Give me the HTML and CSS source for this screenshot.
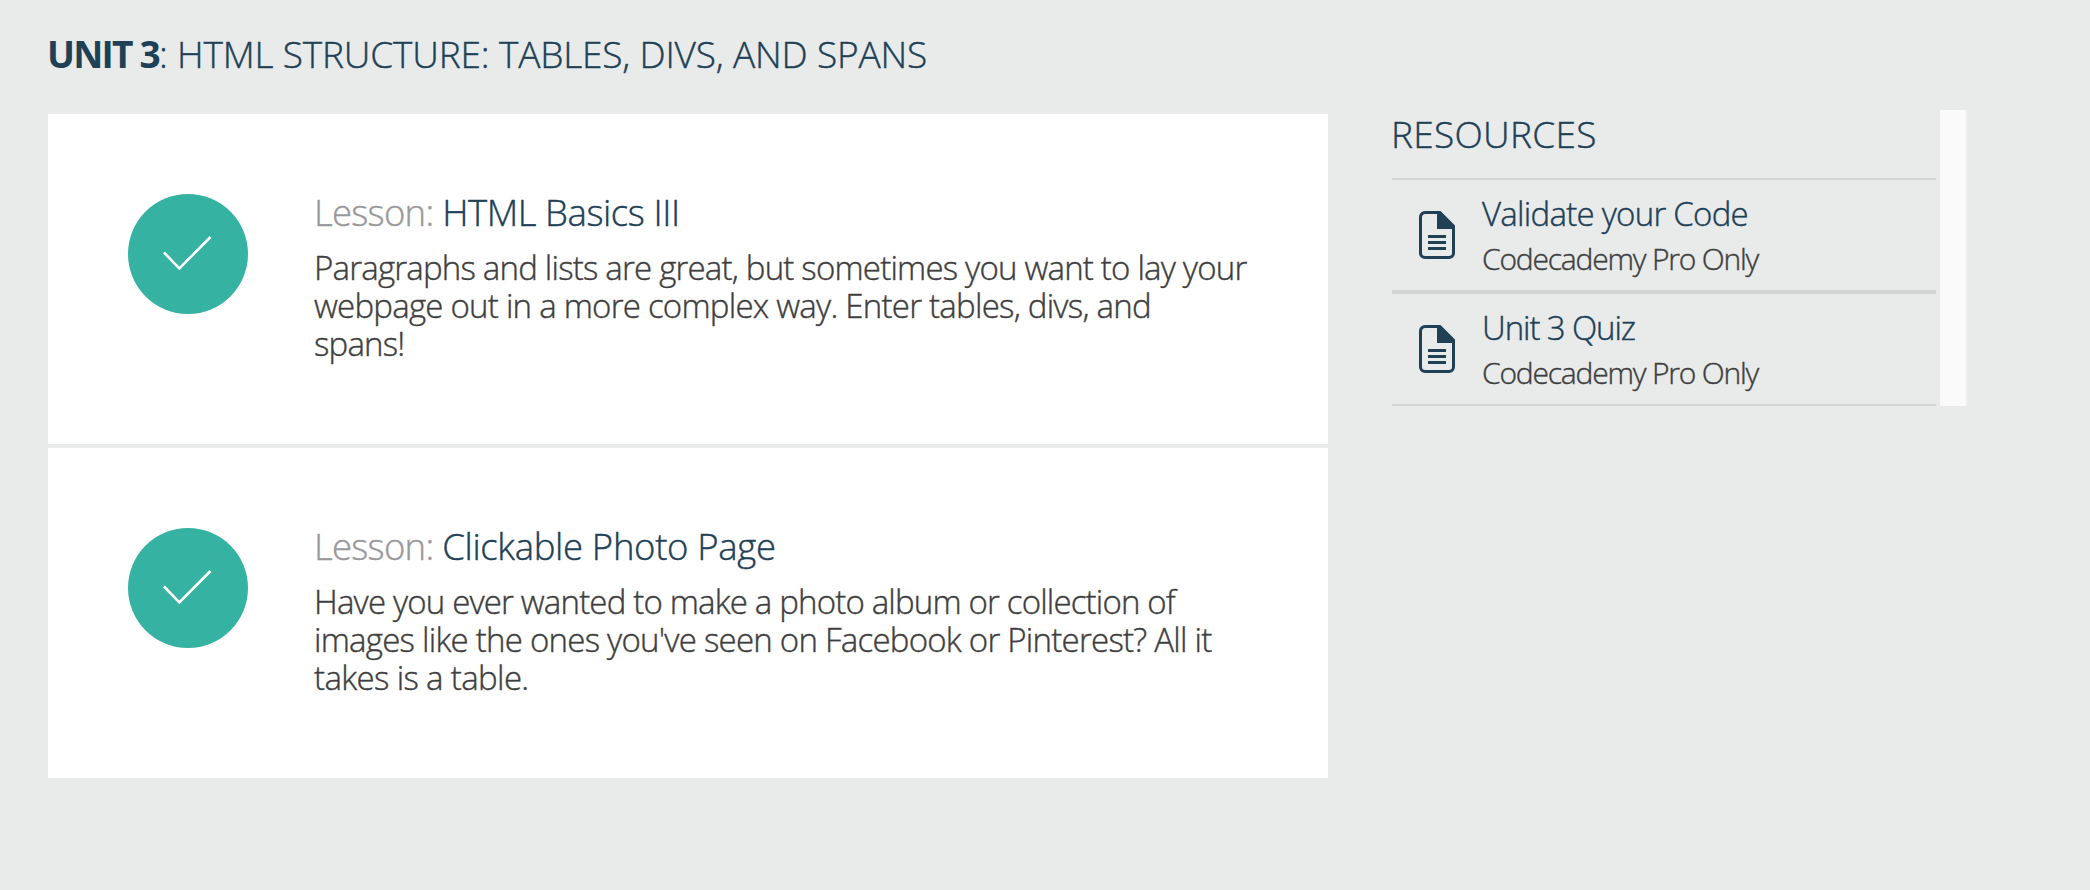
FILE: index.html
```html
<!DOCTYPE html>
<html lang="en">
<head>
<meta charset="utf-8">
<title>Unit 3</title>
<link rel="stylesheet" href="styles.css">
</head>
<body>
<h1 class="unit-title"><strong class="unit-number">UNIT 3</strong>: HTML STRUCTURE: TABLES, DIVS, AND SPANS</h1>
<div class="columns">
  <main class="lessons">
    <article class="lesson">
      <svg class="badge" viewBox="0 0 120 120"><circle cx="60" cy="60" r="60"/><path d="M36 58.5 51.3 74.5 82.5 43"/></svg>
      <div class="lesson-text">
        <h2 class="lesson-title"><span class="kind">Lesson:</span> <span class="name-basics">HTML Basics III</span></h2>
        <p class="lesson-body"><span class="line">Paragraphs and lists are great, but sometimes you want to lay your</span> <span class="line loose">webpage out in a more complex way. Enter tables, divs, and</span> <span class="line">spans!</span></p>
      </div>
    </article>
    <article class="lesson">
      <svg class="badge" viewBox="0 0 120 120"><circle cx="60" cy="60" r="60"/><path d="M36 58.5 51.3 74.5 82.5 43"/></svg>
      <div class="lesson-text">
        <h2 class="lesson-title"><span class="kind">Lesson:</span> <span class="name-photo">Clickable Photo Page</span></h2>
        <p class="lesson-body"><span class="line tight">Have you ever wanted to make a photo album or collection of</span> <span class="line loose">images like the ones you've seen on Facebook or Pinterest? All it</span> <span class="line looser">takes is a table.</span></p>
      </div>
    </article>
  </main>
  <aside class="resources">
    <div class="resource-list">
      <h2 class="resources-title">RESOURCES</h2>
      <div class="resource">
        <svg class="doc" viewBox="0 0 36 48"><path class="outline" d="M19.5 1.5H6A4.5 4.5 0 0 0 1.5 6V42A4.5 4.5 0 0 0 6 46.5H30A4.5 4.5 0 0 0 34.5 42V16"/><path d="M18 0H21.5L36 14.5V18H18ZM9 24H27V27H9ZM9 30H27V33H9ZM9 36H27V39H9Z"/></svg>
        <div><div class="resource-name">Validate your Code</div><div class="resource-note">Codecademy Pro Only</div></div>
      </div>
      <div class="resource">
        <svg class="doc" viewBox="0 0 36 48"><path class="outline" d="M19.5 1.5H6A4.5 4.5 0 0 0 1.5 6V42A4.5 4.5 0 0 0 6 46.5H30A4.5 4.5 0 0 0 34.5 42V16"/><path d="M18 0H21.5L36 14.5V18H18ZM9 24H27V27H9ZM9 30H27V33H9ZM9 36H27V39H9Z"/></svg>
        <div><div class="resource-name quiz">Unit 3 Quiz</div><div class="resource-note">Codecademy Pro Only</div></div>
      </div>
    </div>
    <div class="scroll-track"></div>
  </aside>
</div>
</body>
</html>
```
FILE: styles.css
```css
* { box-sizing: border-box; margin: 0; padding: 0; }
body { background: #e8ebea; color: #3e3e40; font-family: "Open Sans", sans-serif; font-weight: 300; height: 890px; padding: 29px 0 0 48px; overflow: hidden; white-space: nowrap; -webkit-text-stroke: 0.4px currentColor; }
.unit-title { height: 81px; margin-left: -1px; font-size: 37px; line-height: 50px; font-weight: 300; color: #204056; letter-spacing: -0.17px; }
.unit-number { font-weight: 700; letter-spacing: -1.75px; -webkit-text-stroke: 0; }
.columns { display: flex; align-items: flex-start; gap: 64px; }
.lessons { width: 1280px; margin-top: 4px; display: grid; gap: 4px; }
.lesson { background: #fff; height: 330px; padding: 73px 0 0 80px; display: flex; align-items: flex-start; gap: 66px; }
.badge { width: 120px; height: 120px; margin-top: 7px; flex: none; }
.badge circle { fill: #35b2a1; }
.badge path { fill: none; stroke: #fff; stroke-width: 2.6; }
.lesson-title { font-size: 36.5px; line-height: 50px; font-weight: 300; color: #204056; letter-spacing: -0.72px; }
.kind { color: #98989c; }
.name-basics { letter-spacing: -0.43px; }
.name-photo { letter-spacing: -0.33px; }
.lesson-body { margin-top: 12px; font-size: 33px; line-height: 38px; }
.line { display: block; letter-spacing: -0.8px; }
.line.tight { letter-spacing: -0.83px; }
.line.loose { letter-spacing: -0.76px; }
.line.looser { letter-spacing: -0.65px; }
.resources { display: flex; gap: 2px; }
.resource-list { width: 544px; }
.resources-title { height: 68px; margin-left: -1px; font-size: 37px; line-height: 48px; font-weight: 300; color: #204056; letter-spacing: 0.3px; }
.resource { height: 114px; border-top: 2px solid #d3d6d5; border-bottom: 2px solid #d3d6d5; padding: 14px 0 0 27px; display: flex; gap: 27px; }
.doc { width: 36px; height: 48px; margin-top: 17px; flex: none; fill: #204056; }
.doc .outline { fill: none; stroke: #204056; stroke-width: 3; }
.resource-name { font-size: 33px; line-height: 40px; color: #204056; letter-spacing: -0.74px; }
.resource-name.quiz { letter-spacing: -1.1px; }
.resource-note { margin-top: 5px; font-size: 30px; line-height: 40px; letter-spacing: -1.2px; }
.scroll-track { width: 30px; height: 296px; background: #fafafa; border-left: 2px solid #e9e9e9; border-right: 2px solid #ededed; }
```
